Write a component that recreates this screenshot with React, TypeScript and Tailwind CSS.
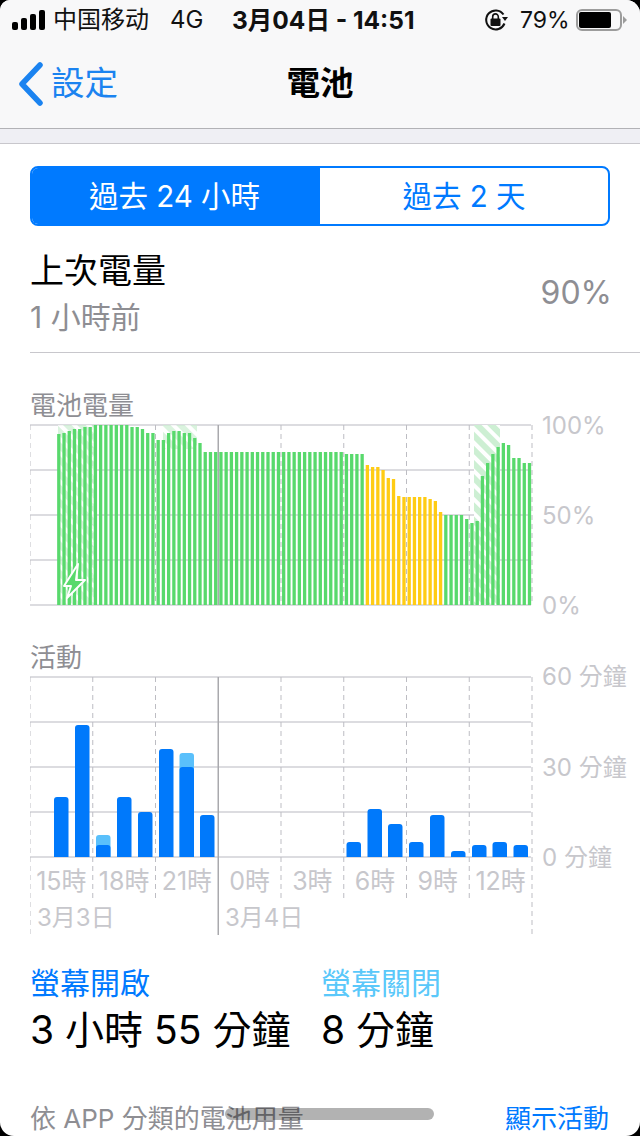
const batteryTops = [
  434, 433, 431, 429, 429, 427, 427, 425, 425, 425, 425, 425, 425, 425, 427, 427, 429, 433, 433, 440, 440, 433, 431, 431,
  433, 433, 438, 443,
  ...Array(27).fill(452),
  ...Array(4).fill(454),
  465, 467, 467, 470, 478, 479, 496, 497, 497, 497, 497, 497, 499, 501, 512,
  515, 515, 515, 515, 519, 523, 521, 476, 463, 454, 447, 443, 445, 458, 458, 463, 463,
];

const activityBars = [
  { x: 54, top: 797 },
  { x: 75, top: 725 },
  { x: 96, top: 845, off: 835 },
  { x: 117, top: 797 },
  { x: 138, top: 812 },
  { x: 159, top: 749 },
  { x: 179.5, top: 767, off: 753 },
  { x: 200, top: 815 },
  { x: 346.5, top: 842 },
  { x: 367.5, top: 809 },
  { x: 388, top: 824 },
  { x: 409, top: 842 },
  { x: 430, top: 815 },
  { x: 451, top: 851 },
  { x: 472, top: 845 },
  { x: 492.5, top: 842 },
  { x: 513.5, top: 845 },
];

const columns = [30, 92.75, 155.5, 218.25, 281, 343.75, 406.5, 469.25, 532];

const BatteryChart = () => (
  <svg width="510" height="182" viewBox="30 424 510 182" className="block shrink-0">
    <defs>
      <pattern id="hatch" width="10" height="10" patternUnits="userSpaceOnUse" patternTransform="rotate(-45)">
        <rect width="10" height="10" fill="#cdefd3" />
        <rect width="4" height="10" fill="#ffffff" />
      </pattern>
    </defs>
    {[0, 1, 2, 3, 4].map((i) => (
      <line key={i} x1="30" x2="531" y1={425 + i * 45} y2={425 + i * 45} stroke="#d1d1d6" strokeWidth="1.5" />
    ))}
    {columns.map((x) =>
      x === 218.25 ? (
        <line key={x} x1={x} x2={x} y1="425" y2="605" stroke="#a9a9ad" strokeWidth="1.5" />
      ) : (
        <line key={x} x1={x} x2={x} y1="425" y2="605" stroke="#bdbdc3" strokeWidth="1" strokeDasharray="5 4" />
      ),
    )}
    <rect x="58" y="425" width="38" height="180" fill="url(#hatch)" opacity="0.75" />
    <rect x="163" y="425" width="34" height="24" fill="url(#hatch)" opacity="0.75" />
    <rect x="474" y="425" width="26" height="180" fill="url(#hatch)" />
    {batteryTops.map((top, i) => {
      const idx = i + 5;
      const x = 30 + 5.23 * idx + 1;
      const low = idx >= 64 && idx <= 78;
      return <rect key={i} x={x} y={top} width="3.3" height={605 - top} fill={low ? "#ffcc14" : "#58d96c"} />;
    })}
    <path
      d="M78 564 L64 586 L71 586 L67 598 L85 580 L76 580 Z"
      fill="#58d96c"
      stroke="#ffffff"
      strokeWidth="2"
      strokeLinejoin="round"
    />
  </svg>
);

const ActivityChart = () => (
  <svg width="510" height="259" viewBox="30 676 510 259" className="block shrink-0">
    {[0, 1, 2, 3, 4].map((i) => (
      <line key={i} x1="30" x2="531" y1={677 + i * 45} y2={677 + i * 45} stroke="#d1d1d6" strokeWidth="1.5" />
    ))}
    {columns.map((x) =>
      x === 218.25 ? (
        <line key={x} x1={x} x2={x} y1="677" y2="935" stroke="#a9a9ad" strokeWidth="1.5" />
      ) : (
        <line
          key={x}
          x1={x}
          x2={x}
          y1="677"
          y2={x === 30 || x === 532 ? 935 : 902}
          stroke="#bdbdc3"
          strokeWidth="1"
          strokeDasharray="5 4"
        />
      ),
    )}
    {activityBars.map((b) => (
      <g key={b.x}>
        {b.off && <path d={`M${b.x} 857 V${b.off + 3} q0 -3 3 -3 h8.5 q3 0 3 3 V857 Z`} fill="#5ac0fb" />}
        <path d={`M${b.x} 857 V${b.top + 3} q0 -3 3 -3 h8.5 q3 0 3 3 V857 Z`} fill="#0079fb" />
      </g>
    ))}
  </svg>
);

const hours = ["15時", "18時", "21時", "0時", "3時", "6時", "9時", "12時"];

export default function App() {
  return (
    <div className="w-[640px] h-[1136px] bg-black overflow-hidden font-['Inter','Noto_Sans_CJK_TC',sans-serif]">
      <div className="relative w-full h-full bg-white rounded-[14px] rounded-tl-[10px] overflow-hidden">
        {/* status + nav */}
        <div className="h-[129px] bg-[#f8f8f9] border-b border-[#b2b2b6]">
          <div className="flex items-center h-[40px] pl-[12px] text-[24px] text-[#111]">
            <div className="flex items-end gap-[3px] w-[41px] h-[20px]">
              <span className="w-[6px] h-[8px] rounded-[2px] bg-black" />
              <span className="w-[6px] h-[12px] rounded-[2px] bg-black" />
              <span className="w-[6px] h-[16px] rounded-[2px] bg-black" />
              <span className="w-[6px] h-[20px] rounded-[2px] bg-black" />
            </div>
            <span className="w-[117px] leading-none">中国移动</span>
            <span className="w-[62px] leading-none">4G</span>
            <span className="w-[252px] font-bold text-[24.5px] leading-none">3月04日 - 14:51</span>
            <svg width="24" height="24" viewBox="0 0 24 24" className="shrink-0">
              <path d="M20.5 15.5 A9.5 9.5 0 1 1 19.5 6.5" fill="none" stroke="#111" strokeWidth="2" />
              <path d="M18 9 L24 9 L21 13 Z" fill="#111" />
              <rect x="6.5" y="10.5" width="10" height="7.5" rx="1" fill="#111" />
              <path d="M8.7 11 V8.7 a2.8 2.8 0 0 1 5.6 0 V11" fill="none" stroke="#111" strokeWidth="1.6" />
            </svg>
            <span className="ml-[12px] w-[56px] text-[23px] leading-none">79%</span>
            <div className="w-[46px] h-[22px] rounded-[6px] border-2 border-[#9c9c9c] p-[1px]">
              <div className="w-[32px] h-full rounded-[2px] bg-black" />
            </div>
            <svg width="4" height="8" viewBox="0 0 4 8" className="ml-[1px] shrink-0">
              <path d="M0 0 L4 4 L0 8 Z" fill="#9c9c9c" />
            </svg>
          </div>
          <div className="relative flex items-center h-[88px] pl-[18px]">
            <svg width="26" height="44" viewBox="0 0 26 44" className="shrink-0">
              <path d="M22 3 L4 22 L22 41" fill="none" stroke="#1b83f0" strokeWidth="5.5" strokeLinecap="round" strokeLinejoin="round" />
            </svg>
            <span className="ml-[7px] text-[33.5px] leading-none text-[#1b83f0]">設定</span>
            <span className="absolute left-0 right-0 text-center text-[33.5px] leading-none font-semibold text-black">電池</span>
          </div>
        </div>
        <div className="h-[15px] bg-[#efeff4] border-b border-[#c8c7cc]" />

        {/* segmented */}
        <div className="grid grid-cols-2 mx-[30px] mt-[22px] h-[60px] rounded-[8px] border-2 border-[#007aff] overflow-hidden text-[29.5px]">
          <div className="flex items-center justify-center bg-[#007aff] text-white">
            <span className="mr-[3px]">過去 24 小時</span>
          </div>
          <div className="flex items-center justify-center text-[#007aff]">過去 2 天</div>
        </div>

        {/* last level */}
        <div className="flex items-center justify-between ml-[30px] pr-[28px] pt-[7px] h-[127px] border-b border-[#c8c7cc]">
          <div className="flex flex-col gap-[6px]">
            <span className="text-[34px] leading-[42px] text-black">上次電量</span>
            <span className="text-[30px] leading-[38px] text-[#8e8e93]">1 小時前</span>
          </div>
          <span className="text-[32px] text-[#8e8e93]">90%</span>
        </div>

        {/* battery chart */}
        <div className="pl-[30px] mt-[35px]">
          <div className="text-[26px] leading-[36px] text-[#8e8e93] h-[36px]">電池電量</div>
          <div className="flex">
            <BatteryChart />
            <div className="flex flex-col justify-between h-[182px] ml-[2px] text-[24px] leading-none text-[#c7c7cc]">
              <span className="mt-[-10px]">100%</span>
              <span>50%</span>
              <span className="mb-[-12px]">0%</span>
            </div>
          </div>
        </div>

        {/* activity chart */}
        <div className="pl-[30px] mt-[34px]">
          <div className="text-[26px] leading-[36px] text-[#8e8e93] h-[36px]">活動</div>
          <div className="relative flex">
            <ActivityChart />
            <div className="flex flex-col h-[182px] ml-[2px] text-[24px] leading-none text-[#c7c7cc]">
              <span className="mt-[-11px] whitespace-nowrap">60 分鐘</span>
              <span className="mt-[67px] whitespace-nowrap">30 分鐘</span>
              <span className="mt-[66px] whitespace-nowrap">0 分鐘</span>
            </div>
            <div className="absolute left-0 top-[191px] w-[502px] grid grid-cols-8 text-[25px] leading-[28px] text-[#c7c7cc]">
              {hours.map((h) => (
                <span key={h} className="text-center">
                  {h}
                </span>
              ))}
            </div>
            <div className="absolute left-[7px] top-[228px] text-[24px] leading-[28px] text-[#c7c7cc]">3月3日</div>
            <div className="absolute left-[195px] top-[228px] text-[24px] leading-[28px] text-[#c7c7cc]">3月4日</div>
          </div>
        </div>

        {/* totals */}
        <div className="flex pl-[30px] mt-[29px]">
          <div className="w-[291px]">
            <div className="text-[30px] leading-[38px] text-[#007aff]">螢幕開啟</div>
            <div className="text-[39px] leading-[50px] text-black mt-[3px]">3 小時 55 分鐘</div>
          </div>
          <div>
            <div className="text-[30px] leading-[38px] text-[#5ac8fa]">螢幕關閉</div>
            <div className="text-[39px] leading-[50px] text-black mt-[3px]">8 分鐘</div>
          </div>
        </div>

        {/* footer */}
        <div className="flex items-center justify-between pl-[30px] pr-[31px] mt-[45px] h-[36px] text-[26px]">
          <span className="text-[#8e8e93]">依 APP 分類的電池用量</span>
          <span className="text-[#007aff]">顯示活動</span>
        </div>

        <div className="absolute left-[225px] top-[1108px] w-[209px] h-[12px] rounded-full bg-black/30" />
      </div>
    </div>
  );
}
